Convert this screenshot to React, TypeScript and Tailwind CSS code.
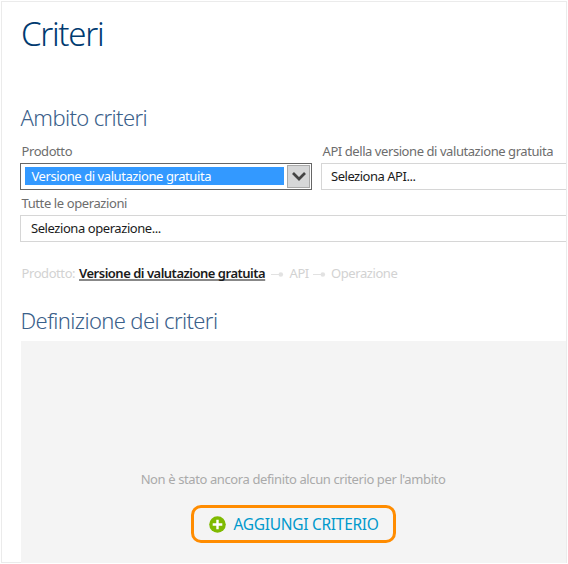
function Arrow() {
  return (
    <svg className="mt-[3px] block h-[7px] w-[14px] shrink-0" viewBox="0 0 14 7">
      <path d="M0 3.5H9" stroke="#e2e2e2" strokeWidth="1" />
      <circle cx="9.8" cy="3.5" r="2.3" fill="#e2e2e2" />
    </svg>
  );
}

export default function App() {
  return (
    <div className="h-[564px] w-[568px] overflow-hidden bg-white pt-px pl-px font-['Noto_Sans','Open_Sans',sans-serif] text-[13px] leading-[18px] whitespace-nowrap">
      <main className="flex h-[562px] w-[566px] flex-col border border-[#ebebeb] pl-[18px]">
        <h1 className="mt-[8px] h-[48px] pl-px text-[33px] leading-[48px] font-light tracking-[-1.3px] text-[#003a70]">
          <span>Criteri</span>
        </h1>
        <h2 className="mt-[42px] h-[34px] pl-[0.6px] text-[22px] leading-[34px] font-light tracking-[-0.63px] text-[#3a608a]">
          <span>Ambito criteri</span>
        </h2>

        <section className="flex w-[546px] gap-[9px] pt-[8px]">
          <div className="w-[292px] shrink-0">
            <label className="block h-[21px] pl-[1.5px] leading-[19px] tracking-[-0.42px] text-[#6d6d6d]">Prodotto</label>
            <div className="flex h-[27px] w-[292px] items-start border border-[#666] pl-[4px]">
              <div className="mt-[3px] h-[18px] w-[259px] bg-[#3399ff] pl-[6.5px] leading-[18px] tracking-[-0.42px] text-white">
                Versione di valutazione gratuita
              </div>
              <button className="mt-px ml-[3px] flex h-[23px] w-[23px] items-center justify-center border border-[#a9a9a9] bg-[#d6d7d8]">
                <svg className="block h-[9px] w-[14px] shrink-0" viewBox="0 0 14 9">
                  <path d="M1 1L7 7L13 1" fill="none" stroke="#444" strokeWidth="2.7" />
                </svg>
              </button>
            </div>
          </div>
          <div className="min-w-0 flex-1">
            <label className="block h-[21px] pl-[1.5px] leading-[19px] tracking-[-0.43px] text-[#6d6d6d]">
              API della versione di valutazione gratuita
            </label>
            <div className="h-[27px] border border-r-0 border-[#d6d6d6] pl-[9px] leading-[25px] tracking-[-0.48px] text-[#1b1b1b]">
              Seleziona API...
            </div>
          </div>
        </section>

        <section className="w-[546px] pt-[4px]">
          <label className="block h-[21px] pl-[1.5px] leading-[19px] tracking-[-0.4px] text-[#6d6d6d]">Tutte le operazioni</label>
          <div className="h-[27px] border border-r-0 border-[#d6d6d6] pl-[10px] leading-[25px] tracking-[-0.43px] text-[#1b1b1b]">
            Seleziona operazione...
          </div>
        </section>

        <nav className="mt-[21px] flex h-[20px] items-center pl-[1.5px] tracking-[-0.42px] text-[#d2d2d2]">
          <span className="w-[57.5px]">Prodotto:</span>
          <a className="w-[192px] font-semibold tracking-[-0.49px] text-[#1b1b1b]">
            <span className="underline decoration-[#888] decoration-2 underline-offset-[1px] [text-decoration-skip-ink:none]">
              Versione di valutazione gratuita
            </span>
          </a>
          <Arrow />
          <span className="w-[28px] pl-[4.5px]">API</span>
          <Arrow />
          <span className="pl-[4px]">Operazione</span>
        </nav>

        <h2 className="mt-[20px] h-[34px] pl-[0.6px] text-[22px] leading-[34px] font-light tracking-[-0.62px] text-[#3a608a]">
          <span>Definizione dei criteri</span>
        </h2>

        <section className="mt-[4px] -mb-px ml-px flex h-[222px] w-[545px] shrink-0 flex-col items-center bg-[#f4f4f4] pt-[129px]">
          <p className="mr-px h-[18px] tracking-[-0.39px] text-[#aaa]">
            Non è stato ancora definito alcun criterio per l'ambito
          </p>
          <button className="mt-[17px] flex h-[38px] w-[205px] items-center rounded-[10px] border-3 border-[#ff8c00] pl-[15px] text-[15.5px] leading-[22px] tracking-[-0.29px] text-[#0099cc]">
            <svg className="mr-[7.5px] block h-[17px] w-[17px] shrink-0" viewBox="0 0 17 17">
              <circle cx="8.5" cy="8.5" r="8.3" fill="#7fba00" />
              <path d="M8.5 3.7V13.3M3.7 8.5H13.3" stroke="white" strokeWidth="2.4" />
            </svg>
            <span>AGGIUNGI CRITERIO</span>
          </button>
        </section>
      </main>
    </div>
  );
}
